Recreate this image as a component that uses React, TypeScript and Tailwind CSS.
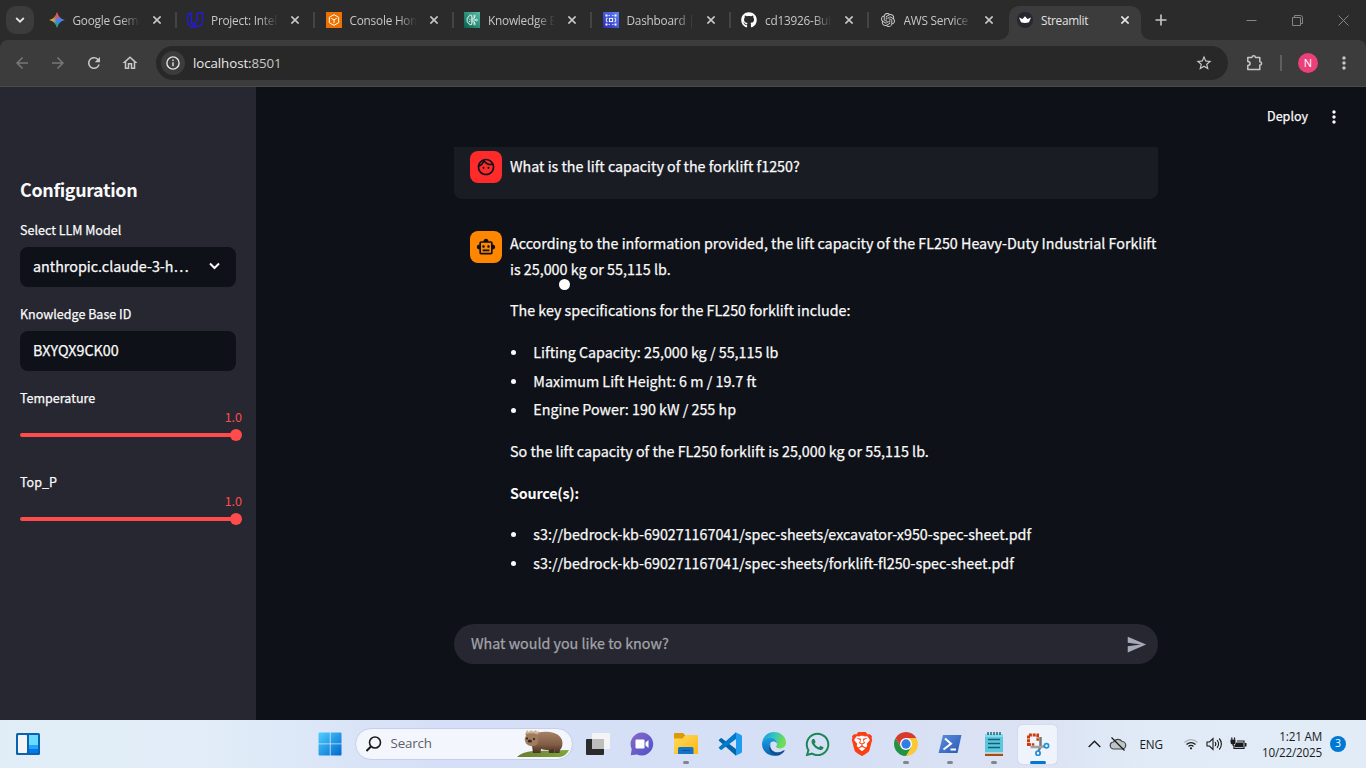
import React from "react";
import { FaGithub, FaWhatsapp } from "react-icons/fa";
import { SiOpenai, SiBrave } from "react-icons/si";
import {
  MdOutlineFace,
  MdOutlineSmartToy,
  MdSend,
  MdMoreVert,
  MdStarBorder,
  MdArrowBack,
  MdArrowForward,
  MdRefresh,
  MdOutlineHome,
} from "react-icons/md";

const sans = "font-['Noto_Sans_CJK_SC',sans-serif]";
const ui = "font-['Open_Sans','Noto_Sans',sans-serif]";
const heavier = "[-webkit-text-stroke:0.25px_currentColor]";

const GeminiIcon = () => (
  <svg width="16" height="16" viewBox="0 0 16 16">
    <defs>
      <linearGradient id="gem" x1="0" y1="0.3" x2="1" y2="0.5">
        <stop offset="0.05" stopColor="#f9c80c" />
        <stop offset="0.3" stopColor="#c9b030" />
        <stop offset="0.5" stopColor="#3f83f5" />
        <stop offset="1" stopColor="#3c86ff" />
      </linearGradient>
      <linearGradient id="gem2" x1="0" y1="0" x2="0" y2="1">
        <stop offset="0" stopColor="#f34646" />
        <stop offset="0.25" stopColor="#ef4e50" />
        <stop offset="0.5" stopColor="#e84f62" stopOpacity="0" />
        <stop offset="0.6" stopColor="#1fae55" stopOpacity="0" />
        <stop offset="0.85" stopColor="#1fae55" />
      </linearGradient>
    </defs>
    <path d="M8 .2C8.900 4.300 11.700 7.100 15.800 8C11.700 8.900 8.900 11.700 8 15.800C7.100 11.700 4.300 8.900.2 8C4.300 7.100 7.100 4.300 8 .2Z" fill="url(#gem)" />
    <path d="M8 .2C8.900 4.300 11.700 7.100 15.800 8C11.700 8.900 8.900 11.700 8 15.800C7.100 11.700 4.300 8.900.2 8C4.300 7.100 7.100 4.300 8 .2Z" fill="url(#gem2)" />
  </svg>
);

const UdacityIcon = () => (
  <svg width="16" height="16" viewBox="0 0 16 16" fill="none" stroke="#2317f5" strokeWidth="1.200" strokeLinejoin="round">
    <path d="M4.300.9.700 2.600v6.200c0 3.400 2 6.200 5.400 6.500l3-1.400C6 13.700 4.300 11.400 4.300 8.600z" />
    <path d="M9.800 1.900 13 .7h2.300v8.500c0 2.800-1.700 4.900-5 5.300-2.500-.4-3.500-2-3.500-4 2.200.5 3.200-.8 3.200-2.700z" />
  </svg>
);

const ConsoleIcon = () => (
  <svg width="16" height="16" viewBox="0 0 16 16" fill="none">
    <path d="M0 0h16v16H0z" fill="#ed7100" />
    <path d="M8 2.700 12.700 5.300v5.400L8 13.300l-4.700-2.600V5.300zM5.200 6.300 8 7.900l2.800-1.600M8 7.900v3.300" stroke="#fff" strokeWidth="1" strokeLinejoin="round" />
  </svg>
);

const BedrockIcon = () => (
  <svg width="16" height="16" viewBox="0 0 16 16" fill="none">
    <defs>
      <linearGradient id="bed" x1="0" y1="1" x2="1" y2="0">
        <stop stopColor="#055f4e" />
        <stop offset="1" stopColor="#56c0a7" />
      </linearGradient>
    </defs>
    <path d="M0 0h16v16H0z" fill="url(#bed)" />
    <path d="M7.800 3.500C6.500 2.400 4.800 3.200 4.900 4.700 3.300 5.100 2.500 6.800 3.300 8 2.600 9.500 3.500 11 4.900 11.200 5 12.800 6.800 13.300 7.800 12.300V3.500M4.900 6.500 6.200 7.800M5 9.800l1.400-1M8 6.200h2.500V4.700M8 8h4M8 9.900h2.500v1.600" stroke="#fff" strokeWidth=".9" />
    <circle cx="10.500" cy="4" r=".9" stroke="#fff" strokeWidth=".7" />
    <circle cx="12.500" cy="8" r=".9" stroke="#fff" strokeWidth=".7" />
    <circle cx="10.500" cy="12.100" r=".9" stroke="#fff" strokeWidth=".7" />
  </svg>
);

const DashboardIcon = () => (
  <svg width="16" height="16" viewBox="0 0 16 16" fill="none">
    <defs>
      <linearGradient id="dash" x1="0" y1="1" x2="1" y2="0">
        <stop stopColor="#2e27ad" />
        <stop offset="1" stopColor="#5c86ff" />
      </linearGradient>
    </defs>
    <path d="M0 0h16v16H0z" fill="url(#dash)" />
    <rect x="6.400" y="6.400" width="3.200" height="3.200" stroke="#fff" strokeWidth=".9" />
    <path d="M2.500 2.500h2v2h-2zM11.500 2.500h2v2h-2zM2.500 11.500h2v2h-2zM11.500 11.500h2v2h-2zM5.500 3H7v.8H5.500zM9 3h1.500v.8H9zM5.500 12.300H7v.8H5.500zM9 12.300h1.500v.8H9z" fill="#fff" />
    <path d="M4.600 6.300H3.400v3.400h1.200M11.400 6.300h1.200v3.400h-1.200" stroke="#fff" strokeWidth=".9" />
  </svg>
);

const CrownIcon = () => (
  <svg width="16" height="16" viewBox="0 0 16 16">
    <circle cx="8" cy="8" r="8" fill="#262730" />
    <path d="M2 5.500 5.500 7 8 4.300 10.500 7 14 5.500 12 10.300q-4 1.200-8 0Z" fill="#fff" />
  </svg>
);

const CloseX = ({ bright }: { bright?: boolean }) => (
  <svg width="8" height="8" viewBox="0 0 8 8" className={bright ? "text-[#e8e8e8]" : "text-[#c7c7c7]"}>
    <path d="M.4.400 7.600 7.600M7.600.400.400 7.600" stroke="currentColor" strokeWidth="1.600" />
  </svg>
);

const tabs: { title: string; icon: React.ReactNode }[] = [
  { title: "Google Gemi", icon: <GeminiIcon /> },
  { title: "Project: Intelli", icon: <UdacityIcon /> },
  { title: "Console Hom", icon: <ConsoleIcon /> },
  { title: "Knowledge B", icon: <BedrockIcon /> },
  { title: "Dashboard |", icon: <DashboardIcon /> },
  { title: "cd13926-Buil", icon: <FaGithub size={16} color="#fff" /> },
  { title: "AWS Service", icon: <SiOpenai size={14} color="#d0d0d0" /> },
];

function TabStrip() {
  return (
    <div className={`flex h-10 bg-[#2b2b2b] ${ui}`}>
      <div className="ml-1.5 mt-1.5 flex size-7 items-center justify-center rounded-[10px] bg-[#3c3c3c]">
        <svg width="10" height="8" viewBox="0 0 10 8" fill="none" stroke="#e3e3e3" strokeWidth="1.800">
          <path d="M1.200 2 5 5.700 8.800 2" />
        </svg>
      </div>
      <div className="ml-1 flex">
        {tabs.map((t, i) => (
          <div key={t.title} className="flex h-10 w-[138.500px] items-center pl-[10.500px]">
            <span className="flex size-4 shrink-0 items-center justify-center">{t.icon}</span>
            <span className="ml-2 mt-0.5 w-[68px] overflow-hidden whitespace-nowrap text-[11.800px] tracking-[-0.22px] text-[#c7c7c7] [mask-image:linear-gradient(to_right,#000_72%,transparent)]">
              {t.title}
            </span>
            <span className="ml-[13px]">
              <CloseX />
            </span>
            {i < 6 && <span className="ml-[14px] h-4 w-[2px] bg-[#444444]" />}
          </div>
        ))}
        <div className="relative ml-[1.500px] mt-1.5 flex h-[34px] w-[132px] items-center rounded-t-[10px] bg-[#3c3c3c] pb-[6px] pl-2">
          <svg width="10" height="10" viewBox="0 0 10 10" className="absolute -left-2.5 bottom-0">
            <path d="M10 0v10H0A10 10 0 0 0 10 0Z" fill="#3c3c3c" />
          </svg>
          <svg width="10" height="10" viewBox="0 0 10 10" className="absolute -right-2.5 bottom-0">
            <path d="M0 0v10h10A10 10 0 0 1 0 0Z" fill="#3c3c3c" />
          </svg>
          <CrownIcon />
          <span className="ml-2 mt-0.5 w-[80px] text-[11.800px] tracking-[-0.3px] text-[#e3e3e3]">Streamlit</span>
          <CloseX bright />
        </div>
      </div>
      <div className="flex flex-1 items-center text-[#c7c7c7]">
        <svg width="12" height="12" viewBox="0 0 12 12" className="ml-3.5">
          <path d="M6 .5v11M.5 6h11" stroke="currentColor" strokeWidth="1.600" />
        </svg>
      </div>
      <div className="mr-[17px] flex items-center gap-[35px] text-[#858585]">
        <svg width="11" height="11" viewBox="0 0 11 11">
          <path d="M.5 5.500h10" stroke="currentColor" />
        </svg>
        <svg width="11" height="11" viewBox="0 0 11 11" fill="none" stroke="currentColor">
          <path d="M.5 2.500h8v8h-8zM2.500 2.500v-2h6a2 2 0 0 1 2 2v6h-2" />
        </svg>
        <svg width="11" height="11" viewBox="0 0 11 11">
          <path d="m.5.500 10 10M10.500.500l-10 10" stroke="currentColor" />
        </svg>
      </div>
    </div>
  );
}

function Toolbar() {
  return (
    <div className="bg-[#2b2b2b]">
      <div className={`flex h-[47px] items-center rounded-t-lg border-b border-[#4a4a4a] bg-[#3c3c3c] ${ui}`}>
        <div className="ml-[13px] flex w-[143px] items-center gap-[18px] text-[#c7c7c7]">
          <MdArrowBack size={18} color="#777777" />
          <MdArrowForward size={18} color="#777777" />
          <MdRefresh size={18} />
          <MdOutlineHome size={18} />
        </div>
        <div className="flex h-[34px] w-[1072px] items-center rounded-full bg-[#282828] pl-[5px] pr-[15px]">
          <span className="flex size-6 items-center justify-center rounded-full bg-[#3c3c3c]">
            <svg width="14" height="14" viewBox="0 0 14 14" fill="none" stroke="#e3e3e3" strokeWidth="1.400">
              <circle cx="7" cy="7" r="6.100" />
              <path d="M7 6.300v4M7 3.500v1.500" />
            </svg>
          </span>
          <span className="ml-2 mt-px flex-1 text-[13.300px] tracking-[-0.07px] text-[#e8e8e8]">
            localhost:<span className="text-[#c7c7c7]">8501</span>
          </span>
          <MdStarBorder size={18} color="#c7c7c7" />
        </div>
        <svg width="18" height="18" viewBox="0 0 18 18" className="ml-[18px]" fill="none" stroke="#c7c7c7" strokeWidth="1.500">
          <path d="M1.800 3.500h4.100q.2-1.700 1.800-1.700t1.800 1.700h4.300v4.200q1.800.1 1.800 1.700t-1.800 1.700v4.500H1.800v-4.200q2.300-.2 2.300-2t-2.300-2z" strokeLinejoin="round" />
        </svg>
        <span className="ml-4 h-4 w-[2px] bg-[#5f5f5f]" />
        <span className="ml-4 flex size-5 items-center justify-center rounded-full bg-[#ec407a] text-[11px] text-white">N</span>
        <MdMoreVert size={20} color="#c7c7c7" className="ml-[16px]" />
      </div>
    </div>
  );
}

const Slider = ({ label, className }: { label: string; className: string }) => (
  <div className={`flex flex-col ${className}`}>
    <span className="h-5 text-[12.530px] leading-5">{label}</span>
    <span className="-mr-1.5 h-[19px] self-end text-[12.530px] leading-[17px] text-[#ff4b4b] [-webkit-text-stroke:0]">1.0</span>
    <div className="mt-[2px] flex h-3 w-[222px] items-center">
      <span className="h-1 flex-1 rounded-l bg-[#ff4b4b]" />
      <span className="-ml-1 size-3 rounded-full bg-[#ff4b4b]" />
    </div>
  </div>
);

function Sidebar() {
  return (
    <aside className={`flex w-64 shrink-0 flex-col bg-[#262730] px-5 pt-[90px] text-[#fafafa] ${heavier}`}>
      <h2 className="h-6 text-[17.900px] font-bold leading-6 tracking-[-0.34px] [-webkit-text-stroke:0]">Configuration</h2>
      <span className="mt-[19px] h-5 text-[12.530px] leading-5">Select LLM Model</span>
      <div className="mt-[7px] flex h-10 items-center justify-between rounded-lg bg-[#0e1117] pb-[2px] pl-[13px] pr-4 text-[14.320px]">
        <span>anthropic.claude-3-h…</span>
        <svg width="11" height="8" viewBox="0 0 11 8" fill="none" stroke="#fafafa" strokeWidth="2">
          <path d="M1 1.500 5.500 6 10 1.500" />
        </svg>
      </div>
      <span className="mt-[17px] h-5 text-[12.530px] leading-5">Knowledge Base ID</span>
      <div className="mt-[7px] flex h-10 items-center rounded-lg bg-[#0e1117] pb-[2px] pl-[13px] text-[14.320px]">BXYQX9CK00</div>
      <Slider label="Temperature" className="mt-[17px]" />
      <Slider label="Top_P" className="mt-[31px]" />
    </aside>
  );
}

const List = ({ items }: { items: string[] }) => (
  <ul className="flex flex-col gap-[3.200px]">
    {items.map((s) => (
      <li key={s} className="flex items-center">
        <span className="ml-[1px] mt-[2px] size-[5px] rounded-full bg-[#fafafa]" />
        <span className="ml-[17.300px]">{s}</span>
      </li>
    ))}
  </ul>
);

function Chat() {
  return (
    <main className={`flex flex-1 flex-col bg-[#0e1117] text-[#fafafa] ${heavier}`}>
      <div className="flex h-[60px] items-center justify-end pr-[22px]">
        <span className="pb-[2px] text-[12.530px]">Deploy</span>
        <MdMoreVert size={20} className="ml-[16px]" />
      </div>
      <div className="ml-[198px] flex w-[704px] flex-1 flex-col text-[14.310px] leading-[25.600px]">
        <div className="flex h-[52px] rounded-b-lg bg-[#1a1c24] pl-4 pt-1">
          <span className="flex size-8 items-center justify-center rounded-lg bg-[#ff2b2b] text-[#0e1117]">
            <MdOutlineFace size={20} />
          </span>
          <p className="ml-2 pt-[2px]">What is the lift capacity of the forklift f1250?</p>
        </div>
        <div className="mt-8 flex pl-4">
          <span className="flex size-8 shrink-0 items-center justify-center rounded-lg bg-[#ff8700] text-[#0e1117]">
            <MdOutlineSmartToy size={20} />
          </span>
          <div className="-mt-px ml-2 flex flex-col gap-4 whitespace-nowrap">
            <p className="relative">
              According to the information provided, the lift capacity of the FL250 Heavy-Duty Industrial Forklift
              <br />
              is 25,000 kg or 55,115 lb.
              <span className="absolute left-[48.500px] top-[48.500px] size-[11px] rounded-full bg-white" />
            </p>
            <p>The key specifications for the FL250 forklift include:</p>
            <List
              items={["Lifting Capacity: 25,000 kg / 55,115 lb", "Maximum Lift Height: 6 m / 19.7 ft", "Engine Power: 190 kW / 255 hp"]}
            />
            <p>So the lift capacity of the FL250 forklift is 25,000 kg or 55,115 lb.</p>
            <p className="font-bold tracking-[-0.2px] [-webkit-text-stroke:0]">Source(s):</p>
            <List
              items={[
                "s3://bedrock-kb-690271167041/spec-sheets/excavator-x950-spec-sheet.pdf",
                "s3://bedrock-kb-690271167041/spec-sheets/forklift-fl250-spec-sheet.pdf",
              ]}
            />
          </div>
        </div>
        <div className="mb-14 mt-auto flex h-10 items-center justify-between rounded-full bg-[#262730] pl-[17px] pr-[11px] text-[#a3a4a9]">
          <span className="pb-[2px]">What would you like to know?</span>
          <MdSend size={21} color="#a5a9b8" />
        </div>
      </div>
    </main>
  );
}

const Wombat = () => (
  <svg width="54" height="28" viewBox="0 0 54 28">
    <defs>
      <linearGradient id="fur" x1="0" y1="0" x2="0" y2="1">
        <stop stopColor="#a68265" />
        <stop offset=".6" stopColor="#805d45" />
        <stop offset="1" stopColor="#4c3021" />
      </linearGradient>
      <linearGradient id="grass" x1="0" y1="0" x2="1" y2="0">
        <stop stopColor="#6c7c32" />
        <stop offset="1" stopColor="#7da63e" />
      </linearGradient>
    </defs>
    <path d="M0 27q5-5 16-6l36-1q-3 6-9 7z" fill="url(#grass)" />
    <path d="M31 15h6v8h-5zM15 15h6v8h-5z" fill="#4c3021" />
    <path d="M15 5Q22 1 33 2q9 1 12 8 1.500 6-2 10l-.5 3h-5l-.5-4q-7 2-13 0l-.5 4h-6l-2-8z" fill="url(#fur)" />
    <path d="M8.500 3.500Q9 1 11 2.300q5-1.500 8 .2 2.500-1.500 3 1L21 7q1.500 6-2.500 8.500-6 2-9.500-2-2.500-4.500 0-7.500z" fill="#a17b5d" />
    <path d="m9 3 1-3 2 2 2-2 2 2 3-2 1 2 2-1-1 3.500q-6-2-12-.5" fill="#cdb594" />
    <circle cx="10" cy="8.500" r="1" fill="#241a15" />
    <circle cx="17" cy="9" r="1.100" fill="#241a15" />
    <ellipse cx="12.800" cy="11" rx="2.200" ry="1.500" fill="#3b2a24" />
  </svg>
);

const StartIcon = () => (
  <svg width="24" height="24" viewBox="0 0 24 24">
    <defs>
      <linearGradient id="win" x1="0" y1="0" x2="1" y2="1">
        <stop stopColor="#4fd0ff" />
        <stop offset="1" stopColor="#0067cd" />
      </linearGradient>
    </defs>
    <path d="M1.500.500h10.300v11H.500v-10a1 1 0 0 1 1-1zM12.600.500h9.900a1 1 0 0 1 1 1v10H12.600zM.500 12.300h11.300v11.200H1.500a1 1 0 0 1-1-1zM12.600 12.300h10.900v10.200a1 1 0 0 1-1 1h-9.900z" fill="url(#win)" />
  </svg>
);

const WidgetsIcon = () => (
  <svg width="24" height="22" viewBox="0 0 24 22">
    <rect width="24" height="22" rx="1.500" fill="#0a62b0" />
    <rect x="2" y="2" width="9" height="18" rx=".8" fill="#f5f5f5" />
    <path d="M13 2h9v10h-9z" fill="#69dcff" />
    <path d="M13 12h9v4h-9z" fill="#1fa4ff" />
    <path d="M13 16h9v4h-9z" fill="#0078e8" />
  </svg>
);

const TaskViewIcon = () => (
  <svg width="24" height="24" viewBox="0 0 24 24">
    <rect x="0" y="7" width="18" height="16" rx="1" fill="#2b2b2b" />
    <rect x="6" y="1" width="18" height="16" rx="1" fill="#f4f4f4" />
    <path d="M6 7h12v10H6z" fill="#bdbdbd" />
  </svg>
);

const ChatIcon = () => (
  <svg width="24" height="24" viewBox="0 0 24 24">
    <defs>
      <linearGradient id="cht" x1="0" y1="0" x2="1" y2="1">
        <stop stopColor="#8a6ac8" />
        <stop offset="1" stopColor="#4c52c8" />
      </linearGradient>
    </defs>
    <path d="M12 .5A11.500 11.500 0 1 1 7 22.500L.8 23.300 1.700 17A11.500 11.500 0 0 1 12 .5Z" fill="url(#cht)" />
    <rect x="5.500" y="7.500" width="9" height="9" rx="1" fill="#fff" />
    <path d="m15.500 10.500 3-2.500v8l-3-2.500z" fill="#fff" />
  </svg>
);

const FolderIcon = () => (
  <svg width="24" height="24" viewBox="0 0 24 24">
    <defs>
      <linearGradient id="fol" x1="0" y1="0" x2="1" y2="1">
        <stop stopColor="#ffd95e" />
        <stop offset="1" stopColor="#fcb913" />
      </linearGradient>
    </defs>
    <path d="M1 1h8l2 2v4H0V2a1 1 0 0 1 1-1z" fill="#dc9a04" />
    <path d="M0 6.500h8.500L11.500 3H23a1 1 0 0 1 1 1v18H0z" fill="url(#fol)" />
    <path d="M4 22v-5.500A1.500 1.500 0 0 1 5.500 15h12.500a1.500 1.500 0 0 1 1.500 1.500V22z" fill="#1475c8" />
    <path d="M8 18.500h8" stroke="#0d529c" />
  </svg>
);

const CodeIcon = () => (
  <svg width="24" height="24" viewBox="0 0 24 24">
    <path d="M1 7.700 2.700 6.200q.5-.4 1 0L18 17v6.800L.900 8.800q-.5-.6.100-1.100Z" fill="#0065a9" />
    <path d="M1 16.300 2.700 17.800q.5.400 1 0L18 7V.200L.900 15.200q-.5.600.1 1.100Z" fill="#007acc" />
    <path d="M17 .100 23.200 3q.8.400.8 1.200v15.600q0 .8-.8 1.200L17 23.900q1-.2 1-1.500V1.600Q18 .4 17 .1Z" fill="#1f9cf0" />
  </svg>
);

const EdgeIcon = () => (
  <svg width="24" height="24" viewBox="0 0 24 24">
    <defs>
      <linearGradient id="e1" x1="0" y1="0" x2="1" y2="0.3">
        <stop stopColor="#1596dc" />
        <stop offset=".5" stopColor="#35c1c5" />
        <stop offset="1" stopColor="#70df4d" />
      </linearGradient>
      <linearGradient id="e2" x1="0" y1="0" x2="0" y2="1">
        <stop stopColor="#1b9de2" />
        <stop offset="1" stopColor="#0863b4" />
      </linearGradient>
    </defs>
    <path d="M.1 11C.8 4.500 5.800 0 12 0c7 0 12 5 12 10.600 0 3.500-2.700 5.900-6 5.900-2.700 0-4-1-4-1.700 0-.6 1-1.200 1-3C15 9 12.500 7 9 7 5 7 1.500 9 .1 11Z" fill="url(#e1)" />
    <path d="M.1 11C1.800 7.500 5 5.900 8.500 5.900c3.500 0 6.500 2.500 6.500 5.600-1-1.500-2-2-3.500-2-3 0-4.500 3-3.800 6.200C8.800 21 13 23 15.200 23.500 6.500 25.500-.6 19 .1 11Z" fill="url(#e2)" />
    <path d="M8.700 11c-2 5 2.300 9.800 7.500 9.300 2.500-.2 4.300-1.200 5.700-2 .7-.3 1 .2.600.7-1.600 2.400-4.300 4.300-7.300 4.700C9 23.500 4.500 17 8.700 11Z" fill="#124f91" />
  </svg>
);

const ChromeIcon = () => (
  <svg width="24" height="24" viewBox="0 0 48 48">
    <path d="M24 12h20.780A24 24 0 0 1 24 48l10.400-18z" fill="#fcc934" />
    <path d="M34.400 30 24 48A24 24 0 0 1 3.220 12L13.600 30z" fill="#229342" />
    <path d="M3.220 12A24 24 0 0 1 44.780 12H24L13.600 30z" fill="#d93a2e" />
    <circle cx="24" cy="24" r="12" fill="#fff" />
    <circle cx="24" cy="24" r="9.300" fill="#2f7de9" />
  </svg>
);

const ShellIcon = () => (
  <svg width="24" height="24" viewBox="0 0 24 24">
    <defs>
      <linearGradient id="ps" x1="0" y1="0" x2="1" y2="1">
        <stop stopColor="#5a8fdc" />
        <stop offset="1" stopColor="#2b57b5" />
      </linearGradient>
    </defs>
    <path d="M5 3h18.500L19.500 21H.600z" fill="url(#ps)" />
    <path d="m7 6.500 6 5.300-7.500 5.700M12.500 17.500h5.500" fill="none" stroke="#fff" strokeWidth="2" />
  </svg>
);

const NotepadIcon = () => (
  <svg width="24" height="24" viewBox="0 0 24 24">
    <path d="M3 21h18v3H3z" fill="#a24e17" />
    <path d="M3 20h18v1.700H3z" fill="#f5f5f5" />
    <path d="M3 2h18v18.500H3z" fill="#5cc6dd" />
    <path d="M3 2h18v3H3z" fill="#82dbe8" />
    <path d="M6 0v3M9 0v3M12 0v3M15 0v3M18 0v3" stroke="#155b70" strokeWidth="1.400" />
    <path d="M6 7.500h12M6 11.500h12M6 15.500h12" stroke="#116078" strokeWidth="1.500" />
  </svg>
);

const SnipIcon = () => (
  <svg width="24" height="24" viewBox="0 0 24 24" fill="none">
    <path d="M2.500 14V3h10.500" stroke="#cf3b0b" strokeWidth="3" strokeDasharray="3 .8" />
    <path d="M11.700 3v6M2.500 12.500h6" stroke="#cf3b0b" strokeWidth="2.500" strokeDasharray="2.500 .8" />
    <path d="M14.500 5v9.500L12.500 19" stroke="#777" strokeWidth="2.500" />
    <path d="M4.500 15h11l3.500-1" stroke="#a0a0a0" strokeWidth="2.500" />
    <circle cx="20.500" cy="13.700" r="2.100" fill="#fff" stroke="#2492d4" strokeWidth="1.800" />
    <circle cx="12" cy="21.300" r="2.100" fill="#fff" stroke="#2492d4" strokeWidth="1.800" />
  </svg>
);

const BraveIcon = () => (
  <svg width="24" height="24" viewBox="0 0 24 24">
    <path d="M5 6.500 12 4l7 2.500-.5 8L12 20.500l-6.500-6z" fill="#fff" />
    <SiBrave size={24} color="#fb3f12" />
  </svg>
);

const apps: { icon: React.ReactNode; state?: "open" | "active" }[] = [
  { icon: <TaskViewIcon /> },
  { icon: <ChatIcon /> },
  { icon: <FolderIcon />, state: "open" },
  { icon: <CodeIcon /> },
  { icon: <EdgeIcon /> },
  { icon: <FaWhatsapp size={27} color="#1b8755" /> },
  { icon: <BraveIcon /> },
  { icon: <ChromeIcon />, state: "open" },
  { icon: <ShellIcon />, state: "open" },
  { icon: <NotepadIcon />, state: "open" },
  { icon: <SnipIcon />, state: "active" },
];

function Taskbar() {
  return (
    <footer
      className={`flex h-12 items-center bg-[linear-gradient(90deg,#e1edf6_0%,#e1ecf8_16%,#d5dff7_32%,#d5dff5_60%,#dbe2f3_75%,#e0ebf7_84%,#e1ecf7_100%)] text-[#1b1b1b] ${ui}`}
    >
      <div className="ml-4">
        <WidgetsIcon />
      </div>
      <div className="ml-[277.500px]">
        <StartIcon />
      </div>
      <div className="ml-[13px] flex h-8 w-[218.500px] items-center overflow-hidden rounded-full border border-[#c6cfe5] bg-[#f3f6fd] pl-2.5">
        <svg width="16" height="16" viewBox="0 0 16 16" fill="none" stroke="#1b1b1b" strokeWidth="1.600">
          <circle cx="9" cy="6.500" r="5.500" />
          <path d="m5 10.500-4.500 4.500" strokeWidth="2" />
        </svg>
        <span className="ml-[9px] flex-1 text-[13.300px] tracking-[-0.15px] text-[#5d5f66]">Search</span>
        <span className="mr-[1px]">
          <Wombat />
        </span>
      </div>
      <div className="ml-[2.500px] flex">
        {apps.map((a, i) => (
          <div key={i} className="flex w-11 justify-center">
            <div
              className={
                a.state === "active"
                  ? "relative flex h-[39px] w-[39px] items-center justify-center rounded bg-[#eff3fb] shadow-[0_0_1px_#9aa5bd]"
                  : "relative flex h-[39px] w-[39px] items-center justify-center"
              }
            >
              {a.icon}
              {a.state === "open" && <span className="absolute bottom-0 left-[17px] h-[3px] w-[6px] rounded-full bg-[#80858f]" />}
              {a.state === "active" && <span className="absolute bottom-0 left-[12px] h-[3px] w-4 rounded-full bg-[#0078d4]" />}
            </div>
          </div>
        ))}
      </div>
      <div className="flex flex-1 items-center">
        <svg width="13" height="8" viewBox="0 0 13 8" className="ml-[28px]" fill="none" stroke="#1b1b1b" strokeWidth="1.400">
          <path d="M.7 7 6.500 1.200 12.300 7" />
        </svg>
        <svg width="18" height="16" viewBox="0 0 18 16" className="ml-[8px]" fill="none" stroke="#1b1b1b" strokeWidth="1.200">
          <path d="M5 13A3.500 3.500 0 0 1 4.500 6 5 5 0 0 1 13 5.500a3.700 3.700 0 0 1 0 7.500z" fill="#bfc4c9" stroke="#444" />
          <path d="m2.500 1.500 13 13" />
        </svg>
        <span className="ml-[13px] mt-px w-[26px] text-[11.700px] tracking-[-0.2px]">ENG</span>
        <svg width="14" height="12" viewBox="0 0 14 12" className="ml-[18px]" fill="none" stroke="#1b1b1b" strokeWidth="1.200">
          <path d="M.5 4.500a9 9 0 0 1 13 0" stroke="#a9b0b8" />
          <path d="M2.500 6.500a6.400 6.400 0 0 1 9 0M4.500 8.500a3.500 3.500 0 0 1 5 0" />
          <circle cx="7" cy="10.300" r="1.100" fill="#1b1b1b" stroke="none" />
        </svg>
        <svg width="17" height="14" viewBox="0 0 17 14" className="ml-[8px]" fill="none" stroke="#1b1b1b" strokeWidth="1.100">
          <path d="M1 5h2.500L7 1.500v11L3.500 9H1zM9 5a3 3 0 0 1 0 4M11 3.200a5.400 5.400 0 0 1 0 7.600M13.200 1.500a8 8 0 0 1 0 11" />
        </svg>
        <svg width="17" height="14" viewBox="0 0 17 14" className="ml-[7px]" fill="none" stroke="#1b1b1b" strokeWidth="1.200">
          <path d="M7 4h7v7.500H4V8" />
          <path d="M6 5.500h7v4.700H5V8zM15 6h1.500v3.500H15zM.5 2.500h5V5a2 2 0 0 1-5 0z" fill="#1b1b1b" stroke="none" />
          <path d="M1.800.500v2M4.500.500v2M3.200 6v3" />
        </svg>
      </div>
      <div className="mr-2 text-right text-[11.700px] leading-4 tracking-[-0.2px]">
        <div>1:21 AM</div>
        <div>10/22/2025</div>
      </div>
      <div className="mr-5 flex size-4 items-center justify-center rounded-full bg-[#0078d4] text-[10.500px] text-white">3</div>
    </footer>
  );
}

export default function App() {
  return (
    <div className={`flex h-[768px] w-[1366px] flex-col overflow-hidden bg-[#0e1117] ${sans}`}>
      <TabStrip />
      <Toolbar />
      <div className="flex min-h-0 flex-1">
        <Sidebar />
        <Chat />
      </div>
      <Taskbar />
    </div>
  );
}
